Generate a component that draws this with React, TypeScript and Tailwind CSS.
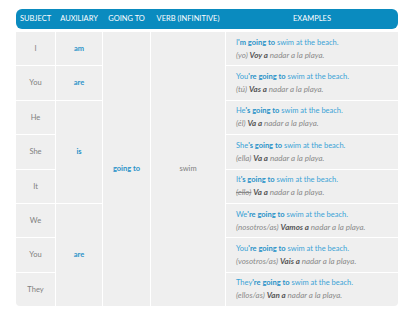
const rows = [
  { s: 'I', pre: 'I', c: "'m", es: '(yo)', v: 'Voy a' },
  { s: 'You', pre: 'You', c: "'re", es: '(tú)', v: 'Vas a' },
  { s: 'He', pre: 'He', c: "'s", es: '(él)', v: 'Va a' },
  { s: 'She', pre: 'She', c: "'s", es: '(ella)', v: 'Va a' },
  { s: 'It', pre: 'It', c: "'s", es: '(ello)', v: 'Va a', strike: true },
  { s: 'We', pre: 'We', c: "'re", es: '(nosotros/as)', v: 'Vamos a' },
  { s: 'You', pre: 'You', c: "'re", es: '(vosotros/as)', v: 'Vais a' },
  { s: 'They', pre: 'They', c: "'re", es: '(ellos/as)', v: 'Van a' },
]

const cell = 'bg-[#efefef] flex items-center justify-center'

export default function App() {
  return (
    <div className="w-[404px] h-[319px] bg-white pt-[9px] pl-[16px] font-['Lato',sans-serif]">
      <div className="w-[382px]">
        <div className="grid grid-cols-[39px_46px_47px_74px_1fr] gap-x-[1px] h-[20px] rounded-[6px] bg-[#0a8bbf] text-white text-[7.5px] uppercase">
          <div className="flex items-center justify-center">Subject</div>
          <div className="flex items-center justify-center">Auxiliary</div>
          <div className="flex items-center justify-center">Going to</div>
          <div className="flex items-center justify-center">Verb (infinitive)</div>
          <div className="flex items-center justify-center">Examples</div>
        </div>
        <div className="mt-[3px] grid grid-cols-[39px_46px_47px_74px_1fr] grid-rows-[repeat(8,33.4px)] gap-[1px] bg-white rounded-b-[4px] overflow-hidden text-[7.5px] text-[#808080]">
          {rows.map((r, i) => (
            <div key={'s' + i} className={cell} style={{ gridColumn: 1, gridRow: i + 1 }}>{r.s}</div>
          ))}
          <div className={cell + ' col-start-2 row-start-1 font-bold text-[#2a93c9]'}>am</div>
          <div className={cell + ' col-start-2 row-start-2 font-bold text-[#2a93c9]'}>are</div>
          <div className={cell + ' col-start-2 row-start-3 row-span-3 font-bold text-[#2a93c9]'}>is</div>
          <div className={cell + ' col-start-2 row-start-6 row-span-3 font-bold text-[#2a93c9]'}>are</div>
          <div className={cell + ' col-start-3 row-start-1 row-span-8 font-bold text-[#2a93c9]'}>going to</div>
          <div className={cell + ' col-start-4 row-start-1 row-span-8'}>swim</div>
          {rows.map((r, i) => (
            <div key={'e' + i} className="bg-[#efefef] flex flex-col justify-center pl-[10px] leading-[12px]" style={{ gridColumn: 5, gridRow: i + 1 }}>
              <div className="text-[#3aa3d6]">
                {r.pre}
                <span className="font-bold text-[#2a93c9]">{r.c} going to</span> swim at the beach.
              </div>
              <div className="italic text-[#8a8a8a] text-[8px]">
                <span className={r.strike ? 'line-through' : ''}>{r.es}</span>{' '}
                <span className="font-bold text-[#555]">{r.v}</span> nadar a la playa.
              </div>
            </div>
          ))}
        </div>
      </div>
    </div>
  )
}
